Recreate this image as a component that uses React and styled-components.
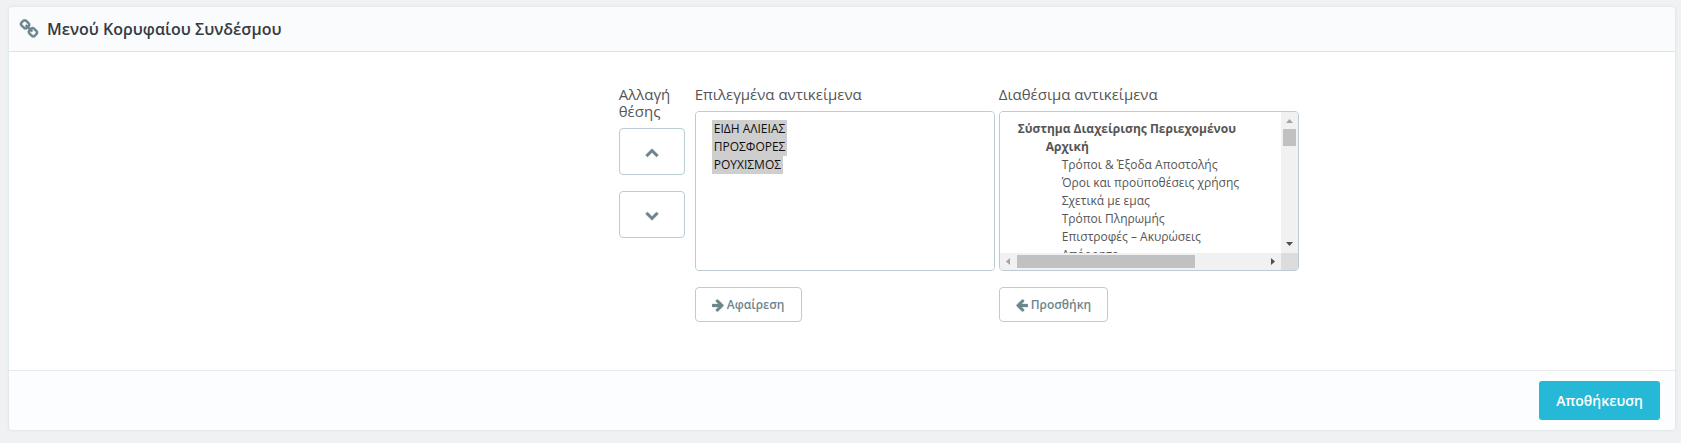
import React from "react";
import styled, { createGlobalStyle } from "styled-components";

const GlobalStyle = createGlobalStyle`
  *, *::before, *::after { box-sizing: border-box; }
  body {
    margin: 0;
    background: #eff1f2;
    color: #555;
    font-family: "Open Sans", "Noto Sans", sans-serif;
    font-size: 12px;
  }
`;

const Page = styled.main`
  padding: 7px 6px 12px 9px;
`;

const Panel = styled.form`
  display: flex;
  flex-direction: column;
  background: #fff;
  border-radius: 4px;
  box-shadow: 0 0 3px #cbdddd;
  overflow: hidden;
`;

const PanelHeader = styled.header`
  display: flex;
  align-items: center;
  gap: 8px;
  height: 45px;
  padding: 0 10px;
  background: #fafbfd;
  border-bottom: 1px solid #dce3e6;
  color: #6c868e;
`;

const PanelTitle = styled.h1`
  margin: 0;
  color: #363a41;
  font-size: 16px;
  font-weight: 600;
  line-height: 24px;
`;

const PanelBody = styled.div`
  display: grid;
  grid-template-columns: 36.6% 1fr;
  padding: 34px 0 48px;
`;

const Chooser = styled.div`
  grid-column: 2;
  display: flex;
  align-items: flex-start;
  gap: 4px;
`;

const PositionColumn = styled.div`
  display: flex;
  flex-direction: column;
  width: 66px;
  margin-right: 6px;
`;

const ListColumn = styled.div`
  display: flex;
  flex-direction: column;
  align-items: flex-start;
  width: 300px;
`;

const Caption = styled.label`
  margin-bottom: 8px;
  font-size: 15px;
  font-weight: 400;
  line-height: 17px;
`;

const OutlineButton = styled.button`
  display: flex;
  align-items: center;
  justify-content: center;
  gap: 3px;
  height: ${(p) => (p.$tall ? 47 : 35)}px;
  padding: 0 16px;
  border: 1px solid #bbcdd2;
  border-radius: 4px;
  background: #fff;
  color: #6c868e;
  font: 600 12px "Open Sans", "Noto Sans", sans-serif;
  cursor: pointer;
  & + & { margin-top: 16px; }
`;

const ListFrame = styled.div`
  display: grid;
  grid-template-columns: 1fr auto;
  grid-template-rows: 1fr auto;
  width: 100%;
  height: 160px;
  margin-bottom: 16px;
  border: 1px solid #bbcdd2;
  border-radius: 4px;
  overflow: hidden;
`;

const ListBox = styled.select`
  width: 100%;
  height: 100%;
  min-width: 0;
  min-height: 0;
  margin: 0;
  padding: 8px 16px;
  border: 0;
  outline: 0;
  background: #fff;
  color: #555;
  font: 400 12px/17px "Open Sans", "Noto Sans", sans-serif;
  scrollbar-width: none;
`;

const Item = styled.option`
  width: fit-content;
  min-height: 18px;
  padding: 0 2px 1px;
`;

const Group = styled.optgroup`
  padding: 0 0 0 ${(p) => (p.$nested ? 28 : 0)}px;
  font-weight: 700;
  line-height: 18px;
  & > option {
    width: auto;
    padding: 0 0 1px 18px;
    font-weight: 400;
    line-height: 17px;
  }
  & > option::before { content: none; }
`;

const ScrollTrack = styled.div`
  display: flex;
  flex-direction: ${(p) => (p.$vertical ? "column" : "row")};
  align-items: center;
  background: #f1f1f1;
`;

const ScrollThumb = styled.div`
  width: ${(p) => (p.$vertical ? 13 : 178)}px;
  height: ${(p) => (p.$vertical ? 17 : 13)}px;
  margin-${(p) => (p.$vertical ? "bottom" : "right")}: auto;
  background: #c1c1c1;
`;

const ScrollCorner = styled.div`
  background: #dcdcdc;
`;

const PanelFooter = styled.footer`
  display: flex;
  justify-content: flex-end;
  padding: 10px 15px;
  background: #fcfdfe;
  border-top: 1px solid #e6eaed;
`;

const SaveButton = styled.button`
  height: 39px;
  padding: 0 17px;
  border: 0;
  border-radius: 3px;
  background: #25b9d7;
  color: #fff;
  font: 600 14px "Open Sans", "Noto Sans", sans-serif;
  cursor: pointer;
`;

const paths = {
  link: "M1520 1216q0-40-28-68l-208-208q-28-28-68-28-42 0-72 32 3 3 19 18.5t21.5 21.5 15 19 13 25.5 3.5 27.5q0 40-28 68t-68 28q-15 0-27.5-3.5t-25.5-13-19-15-21.5-21.5-18.5-19q-33 31-33 73 0 40 28 68l206 207q27 27 68 27 40 0 68-26l147-146q28-28 28-67zm-703-705q0-40-28-68l-206-207q-28-28-68-28-39 0-68 27l-147 146q-28 28-28 67 0 40 28 68l208 208q27 27 68 27 42 0 72-31-3-3-19-18.5t-21.5-21.5-15-19-13-25.5-3.5-27.5q0-40 28-68t68-28q15 0 27.5 3.5t25.5 13 19 15 21.5 21.5 18.5 19q33-31 33-73zm895 705q0 120-85 203l-147 146q-83 83-203 83-121 0-204-85l-206-207q-83-83-83-203 0-123 88-209l-88-88q-86 88-208 88-120 0-204-84l-208-208q-84-84-84-204t85-203l147-146q83-83 203-83 121 0 204 85l206 207q83 83 83 203 0 123-88 209l88 88q86-88 208-88 120 0 204 84l208 208q84 84 84 204z",
  up: "M1683 1331l-166 165q-19 19-45 19t-45-19l-531-531-531 531q-19 19-45 19t-45-19l-166-165q-19-19-19-45.5t19-45.5l742-741q19-19 45-19t45 19l742 741q19 19 19 45.5t-19 45.5z",
  down: "M1683 808l-742 741q-19 19-45 19t-45-19l-742-741q-19-19-19-45.5t19-45.5l166-165q19-19 45-19t45 19l531 531 531-531q19-19 45-19t45 19l166 165q19 19 19 45.5t-19 45.5z",
  right: "M1600 960q0 54-37 91l-651 651q-39 37-91 37-51 0-90-37l-75-75q-38-38-38-91t38-91l293-293h-704q-52 0-84.5-37.5t-32.5-90.5v-128q0-53 32.5-90.5t84.5-37.5h704l-293-294q-38-36-38-90t38-90l75-75q38-38 90-38 53 0 91 38l651 651q37 35 37 90z",
  left: "M1664 896v128q0 53-32.5 90.5t-84.5 37.5h-704l293 294q38 36 38 90t-38 90l-75 76q-37 37-90 37-52 0-91-37l-651-652q-37-37-37-90 0-52 37-91l651-650q38-38 91-38 52 0 90 38l75 74q38 38 38 91t-38 91l-293 293h704q52 0 84.5 37.5t32.5 90.5z",
};

const Icon = ({ name, size = 14, narrow }) => (
  <svg
    width={narrow ? 12 : size}
    height={size}
    viewBox={narrow ? "128 0 1536 1792" : "0 0 1792 1792"}
    fill="currentColor"
    stroke="currentColor"
    strokeWidth="40"
    aria-hidden="true"
  >
    <path d={paths[name]} />
  </svg>
);

const arrowPoints = {
  up: "5,11 12,11 8.5,7",
  down: "5,6 12,6 8.5,10",
  left: "10,5 10,12 6,8.5",
  right: "7,5 7,12 11,8.5",
};

const ScrollArrow = ({ dir, color }) => (
  <svg width="17" height="17" viewBox="0 0 17 17" fill={color} aria-hidden="true">
    <polygon points={arrowPoints[dir]} />
  </svg>
);

const chosen = ["ΕΙΔΗ ΑΛΙΕΙΑΣ", "ΠΡΟΣΦΟΡΕΣ", "ΡΟΥΧΙΣΜΟΣ"];
const available = [
  "Τρόποι & Έξοδα Αποστολής",
  "Όροι και προϋποθέσεις χρήσης",
  "Σχετικά με εμας",
  "Τρόποι Πληρωμής",
  "Επιστροφές – Ακυρώσεις",
  "Απόρρητο",
];

export default function App() {
  return (
    <Page>
      <GlobalStyle />
      <Panel onSubmit={(e) => e.preventDefault()}>
        <PanelHeader>
          <Icon name="link" size={20} />
          <PanelTitle>Μενού Κορυφαίου Συνδέσμου</PanelTitle>
        </PanelHeader>
        <PanelBody>
          <Chooser>
            <PositionColumn role="group" aria-labelledby="position">
              <Caption as="span" id="position">Αλλαγή θέσης</Caption>
              <OutlineButton type="button" $tall aria-label="Πάνω">
                <Icon name="up" />
              </OutlineButton>
              <OutlineButton type="button" $tall aria-label="Κάτω">
                <Icon name="down" />
              </OutlineButton>
            </PositionColumn>
            <ListColumn>
              <Caption htmlFor="chosen">Επιλεγμένα αντικείμενα</Caption>
              <ListFrame>
                <ListBox id="chosen" multiple defaultValue={chosen}>
                  {chosen.map((t) => <Item key={t} value={t}>{t}</Item>)}
                </ListBox>
              </ListFrame>
              <OutlineButton type="button">
                <Icon name="right" narrow />
                Αφαίρεση
              </OutlineButton>
            </ListColumn>
            <ListColumn>
              <Caption htmlFor="available">Διαθέσιμα αντικείμενα</Caption>
              <ListFrame>
                <ListBox id="available" multiple>
                  <Group label="Σύστημα Διαχείρισης Περιεχομένου" />
                  <Group label="Αρχική" $nested>
                    {available.map((t) => <Item key={t} value={t}>{t}</Item>)}
                  </Group>
                </ListBox>
                <ScrollTrack $vertical>
                  <ScrollArrow dir="up" color="#a3a3a3" />
                  <ScrollThumb $vertical />
                  <ScrollArrow dir="down" color="#505050" />
                </ScrollTrack>
                <ScrollTrack>
                  <ScrollArrow dir="left" color="#a3a3a3" />
                  <ScrollThumb />
                  <ScrollArrow dir="right" color="#505050" />
                </ScrollTrack>
                <ScrollCorner />
              </ListFrame>
              <OutlineButton type="button">
                <Icon name="left" narrow />
                Προσθήκη
              </OutlineButton>
            </ListColumn>
          </Chooser>
        </PanelBody>
        <PanelFooter>
          <SaveButton type="submit">Αποθήκευση</SaveButton>
        </PanelFooter>
      </Panel>
    </Page>
  );
}
